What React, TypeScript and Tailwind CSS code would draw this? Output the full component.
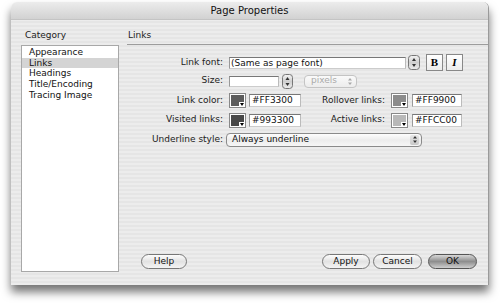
import React from "react";

const font = { fontFamily: '"DejaVu Sans", "Liberation Sans", sans-serif' };

function Stepper({ h = 15, w = 12, faded = false }: { h?: number; w?: number; faded?: boolean }) {
  const c = faded ? "#aaa" : "#333";
  return (
    <svg width={w} height={h} viewBox={`0 0 ${w} ${h}`} className="shrink-0">
      <defs>
        <linearGradient id="stg" x1="0" y1="0" x2="0" y2="1">
          <stop offset="0" stopColor="#f4f4f4" />
          <stop offset="0.5" stopColor="#cfcfcf" />
          <stop offset="1" stopColor="#ececec" />
        </linearGradient>
      </defs>
      <rect x="0.5" y="0.5" width={w - 1} height={h - 1} rx="3" fill="url(#stg)" stroke="#777" />
      <path d={`M${w / 2 - 2} ${h / 2 - 1.5} L${w / 2 + 2} ${h / 2 - 1.5} L${w / 2} ${h / 2 - 4.5} Z`} fill={c} />
      <path d={`M${w / 2 - 2} ${h / 2 + 1.5} L${w / 2 + 2} ${h / 2 + 1.5} L${w / 2} ${h / 2 + 4.5} Z`} fill={c} />
    </svg>
  );
}

function Swatch({ color }: { color: string }) {
  return (
    <div className="relative w-[17px] h-[15px] shrink-0 border border-[#888] bg-white p-[1px]">
      <div className="w-full h-full" style={{ background: color }} />
      <div className="absolute right-0 bottom-0 w-[6px] h-[5px] bg-white flex items-center justify-center">
        <svg width="4" height="3" viewBox="0 0 4 3">
          <path d="M0 0 L4 0 L2 3 Z" fill="#000" />
        </svg>
      </div>
    </div>
  );
}

function TextBox({ value, w }: { value: string; w: string }) {
  return (
    <div
      className={`${w} h-[13px] shrink-0 bg-white border border-t-[#777] border-l-[#999] border-r-[#bbb] border-b-[#ccc] text-[9px] leading-[11px] pl-[2px] text-[#111]`}
    >
      {value}
    </div>
  );
}

function Pill({ label, def = false, w }: { label: string; def?: boolean; w: string }) {
  return (
    <div
      className={`${w} h-[15px] rounded-full border flex items-center justify-center text-[9px] leading-none text-[#111] ${
        def
          ? "border-[#555] bg-gradient-to-b from-[#d8d8d8] via-[#8e8e8e] to-[#cfcfcf]"
          : "border-[#777] bg-gradient-to-b from-[#fdfdfd] via-[#e2e2e2] to-[#f4f4f4]"
      }`}
    >
      {label}
    </div>
  );
}

export default function App() {
  return (
    <div className="w-[500px] h-[305px] bg-white pt-[2px] pl-[11px]" style={font}>
      <div className="w-[478px] h-[283px] rounded-t-[6px] flex flex-col shadow-[0_7px_10px_rgba(0,0,0,0.55)] border-r border-[#9a9a9a] overflow-hidden">
        <div className="h-[18px] shrink-0 bg-gradient-to-b from-[#ececec] to-[#d2d2d2] border-b border-[#c4c4c4] flex items-center justify-center text-[10px] text-[#111]">
          Page Properties
        </div>
        <div className="flex-1 flex bg-[repeating-linear-gradient(0deg,#ececec_0px,#ececec_2px,#e5e5e5_2px,#e5e5e5_4px)]">
          {/* Left column */}
          <div className="w-[108px] pl-[10px] pt-[10px] flex flex-col shrink-0">
            <div className="pl-[4px] text-[9px] leading-[10px] text-[#222]">Category</div>
            <div className="mt-[5px] w-[98px] h-[227px] bg-white border border-[#a8a8a8] pt-[1px] text-[9px] text-[#111]">
              <div className="pl-[7px] leading-[10.7px] h-[10.7px]">Appearance</div>
              <div className="pl-[7px] leading-[10.7px] h-[10.7px] bg-[#d4d4d4]">Links</div>
              <div className="pl-[7px] leading-[10.7px] h-[10.7px]">Headings</div>
              <div className="pl-[7px] leading-[10.7px] h-[10.7px]">Title/Encoding</div>
              <div className="pl-[7px] leading-[10.7px] h-[10.7px]">Tracing Image</div>
            </div>
          </div>
          {/* Right column */}
          <div className="flex-1 flex flex-col pl-[8px]">
            <div className="h-[25px] border-b border-[#9c9c9c] pt-[10px] pl-[1px] text-[9px] leading-[10px] text-[#222]">Links</div>
            <div className="mt-[9px] flex flex-col text-[9px] text-[#222]">
              <div className="h-[17px] flex items-center">
                <div className="w-[96px] text-right">Link font:</div>
                <div className="ml-[6px] w-[177px] h-[12px] bg-white border border-t-[#777] border-l-[#999] border-r-[#bbb] border-b-[#ccc] text-[9px] leading-[10px] pl-[1px] text-[#111]">
                  (Same as page font)
                </div>
                <div className="ml-[2px]">
                  <Stepper w={12} h={15} />
                </div>
                <div className="ml-[6px] w-[17px] h-[17px] bg-gradient-to-b from-white to-[#ececec] border border-[#888] flex items-center justify-center text-[11px] font-bold text-black" style={{ fontFamily: '"Liberation Serif", serif' }}>
                  B
                </div>
                <div className="ml-[3px] w-[17px] h-[17px] bg-gradient-to-b from-white to-[#ececec] border border-[#888] flex items-center justify-center text-[11px] italic font-bold text-black" style={{ fontFamily: '"Liberation Serif", serif' }}>
                  I
                </div>
              </div>
              <div className="h-[20px] flex items-center">
                <div className="w-[96px] text-right">Size:</div>
                <div className="ml-[6px] w-[50px] h-[11px] bg-white border border-t-[#777] border-l-[#999] border-r-[#bbb] border-b-[#ccc]" />
                <div className="ml-[3px]">
                  <Stepper w={11} h={15} />
                </div>
                <div className="ml-[11px] w-[53px] h-[13px] rounded-[4px] border border-[#c4c4c4] bg-gradient-to-b from-[#fafafa] to-[#ececec] flex items-center pl-[6px] pr-[3px] text-[#aaa]">
                  <span className="flex-1">pixels</span>
                  <svg width="6" height="9" viewBox="0 0 6 9">
                    <path d="M1 3.5 L5 3.5 L3 1 Z M1 5.5 L5 5.5 L3 8 Z" fill="#aaa" />
                  </svg>
                </div>
              </div>
              <div className="h-[19px] flex items-center">
                <div className="w-[96px] text-right">Link color:</div>
                <div className="ml-[6px]"><Swatch color="#5c5c5c" /></div>
                <div className="ml-[3px]"><TextBox value="#FF3300" w="w-[52px]" /></div>
                <div className="w-[84px] text-right">Rollover links:</div>
                <div className="ml-[6px]"><Swatch color="#8c8c8c" /></div>
                <div className="ml-[4px]"><TextBox value="#FF9900" w="w-[50px]" /></div>
              </div>
              <div className="h-[20px] flex items-center">
                <div className="w-[96px] text-right">Visited links:</div>
                <div className="ml-[6px]"><Swatch color="#484848" /></div>
                <div className="ml-[3px]"><TextBox value="#993300" w="w-[52px]" /></div>
                <div className="w-[84px] text-right">Active links:</div>
                <div className="ml-[6px]"><Swatch color="#b8b8b8" /></div>
                <div className="ml-[4px]"><TextBox value="#FFCC00" w="w-[50px]" /></div>
              </div>
              <div className="h-[19px] flex items-center">
                <div className="w-[96px] text-right">Underline style:</div>
                <div className="ml-[3px] w-[196px] h-[14px] rounded-[4px] border border-[#8a8a8a] bg-gradient-to-b from-[#fdfdfd] via-[#ececec] to-[#f6f6f6] flex items-center pl-[5px] pr-[2px] text-[#111]">
                  <span className="flex-1">Always underline</span>
                  <div className="w-[9px] h-[10px] rounded-[2px] bg-gradient-to-b from-[#e6e6e6] to-[#c8c8c8] flex items-center justify-center">
                    <svg width="6" height="9" viewBox="0 0 6 9">
                      <path d="M1 3.5 L5 3.5 L3 1 Z M1 5.5 L5 5.5 L3 8 Z" fill="#333" />
                    </svg>
                  </div>
                </div>
              </div>
            </div>
            <div className="flex-1" />
            <div className="h-[15px] mb-[16px] flex items-center pl-[14px] pr-[11px]">
              <Pill label="Help" w="w-[46px]" />
              <div className="flex-1" />
              <Pill label="Apply" w="w-[48px]" />
              <div className="ml-[3px]"><Pill label="Cancel" w="w-[49px]" /></div>
              <div className="ml-[6px]"><Pill label="OK" def w="w-[49px]" /></div>
            </div>
          </div>
        </div>
      </div>
    </div>
  );
}
